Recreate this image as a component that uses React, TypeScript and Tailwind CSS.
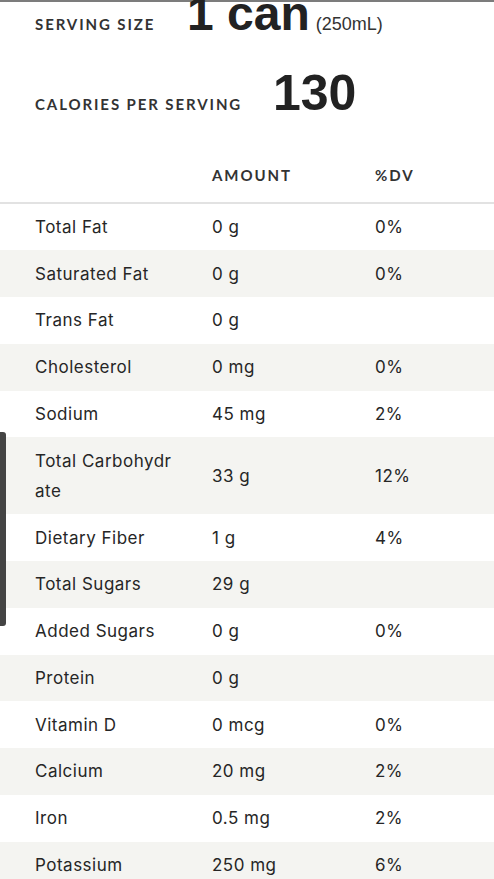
import React from "react";

const rows: { name: string; amount: string; dv: string }[] = [
  { name: "Total Fat", amount: "0 g", dv: "0%" },
  { name: "Saturated Fat", amount: "0 g", dv: "0%" },
  { name: "Trans Fat", amount: "0 g", dv: "" },
  { name: "Cholesterol", amount: "0 mg", dv: "0%" },
  { name: "Sodium", amount: "45 mg", dv: "2%" },
  { name: "Total Carbohydrate", amount: "33 g", dv: "12%" },
  { name: "Dietary Fiber", amount: "1 g", dv: "4%" },
  { name: "Total Sugars", amount: "29 g", dv: "" },
  { name: "Added Sugars", amount: "0 g", dv: "0%" },
  { name: "Protein", amount: "0 g", dv: "" },
  { name: "Vitamin D", amount: "0 mcg", dv: "0%" },
  { name: "Calcium", amount: "20 mg", dv: "2%" },
  { name: "Iron", amount: "0.5 mg", dv: "2%" },
  { name: "Potassium", amount: "250 mg", dv: "6%" },
];

export default function App() {
  return (
    <div className="relative w-[494px] h-[879px] overflow-hidden bg-white text-[#2a2a2a] font-['Lato',sans-serif]">
      <div className="border-t-2 border-[#7c7c7c]" />
      {/* serving size */}
      <div className="flex items-baseline pl-[35px] mt-[-12px] h-[62px]">
        <div className="w-[152px] text-[15px] font-bold tracking-[1.9px] text-[#333]">SERVING SIZE</div>
        <div className="font-['Liberation_Sans',sans-serif] font-bold text-[48px] leading-none text-[#222]">1 can</div>
        <div className="ml-[6px] font-['Liberation_Sans',sans-serif] text-[18px] text-[#333]">(250mL)</div>
      </div>
      {/* calories */}
      <div className="flex items-baseline pl-[35px] mt-[16px] h-[56px]">
        <div className="w-[238px] text-[15px] font-bold tracking-[1.9px] text-[#333]">CALORIES PER SERVING</div>
        <div className="font-['Liberation_Sans',sans-serif] font-bold text-[50px] leading-none text-[#222]">130</div>
      </div>
      {/* header */}
      <div className="grid grid-cols-[177px_163px_1fr] pl-[35px] mt-[40px] pb-[15px] border-b-2 border-[#e2e2e2]">
        <div />
        <div className="text-[15px] font-bold tracking-[1.9px] text-[#333]">AMOUNT</div>
        <div className="text-[15px] font-bold tracking-[1.9px] text-[#333]">%DV</div>
      </div>
      {/* rows */}
      <div className="flex flex-col font-['Inter',sans-serif]">
        {rows.map((r, i) => (
          <div
            key={r.name}
            className={
              "grid grid-cols-[177px_163px_1fr] items-center pl-[35px] py-[8.4px] text-[17px] leading-[30px] tracking-[0.5px] text-[#262626] " +
              (i % 2 === 1 ? "bg-[#f4f4f1]" : "bg-white")
            }
          >
            <div className="pr-[36px] break-all">{r.name}</div>
            <div>{r.amount}</div>
            <div>{r.dv}</div>
          </div>
        ))}
      </div>
      {/* scroll indicator */}
      <div className="absolute left-0 top-[432px] w-[6px] h-[194px] rounded-r-[3px] bg-[#444]" />
    </div>
  );
}
